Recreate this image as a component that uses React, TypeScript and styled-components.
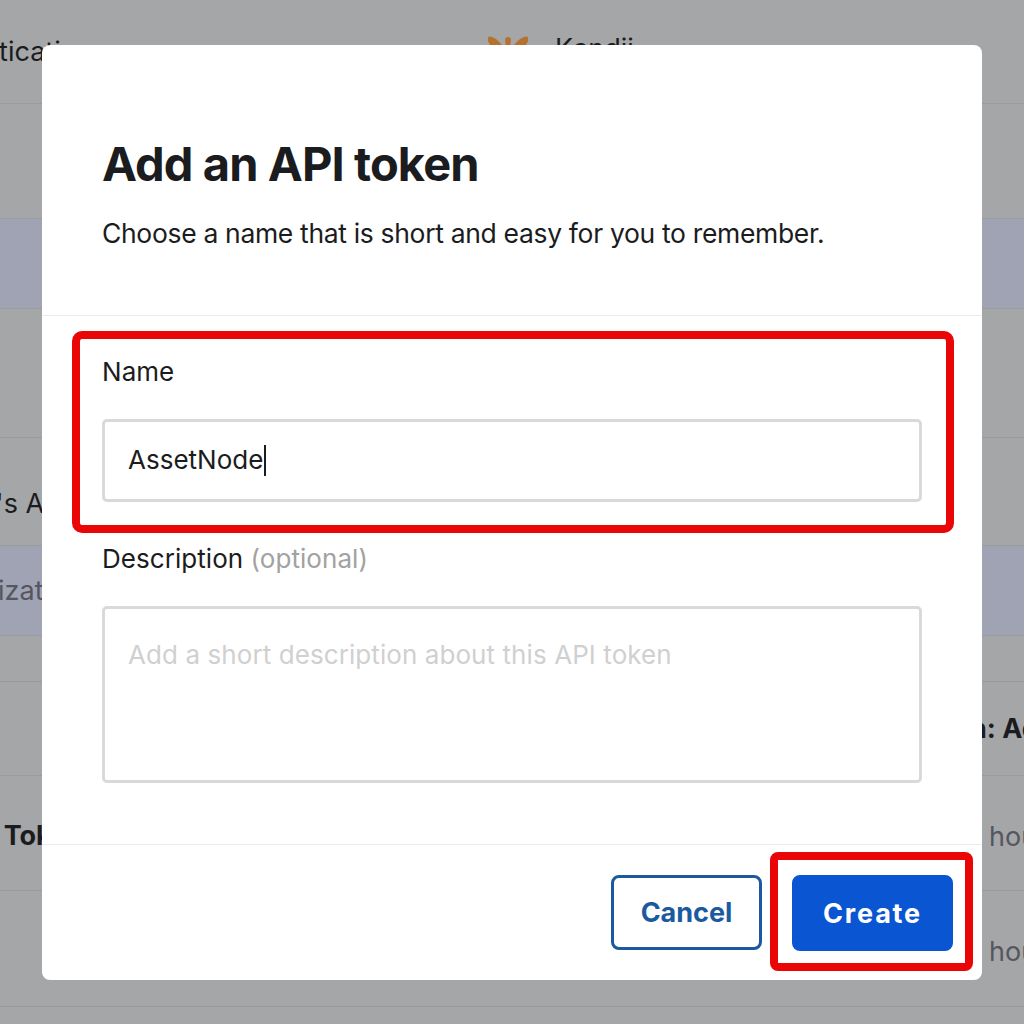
import React from "react";
import styled, { createGlobalStyle } from "styled-components";

const Global = createGlobalStyle`
  html, body { margin: 0; height: 100%; overflow: hidden; background: #a5a6a8; }
  body { font-family: "Inter", "Liberation Sans", sans-serif; }
  * { box-sizing: border-box; }
`;

const Page = styled.div`
  width: 1024px;
  height: 1024px;
  overflow: hidden;
  display: flex;
  flex-direction: column;
`;

const Row = styled.div<{ $h: number; $active?: boolean }>`
  flex: 0 0 ${(p) => p.$h}px;
  display: grid;
  grid-template-columns: 488px 501px 1fr;
  align-items: center;
  border-bottom: 1px solid #9a9b9d;
  background: ${(p) => (p.$active ? "#a0a3b4" : "transparent")};
  font-size: 27px;
  white-space: nowrap;
  color: #1b1c20;
`;

const LeftCell = styled.div<{ $shift: number; $muted?: boolean; $bold?: boolean; $y?: number }>`
  margin-left: ${(p) => p.$shift}px;
  margin-top: ${(p) => p.$y ?? 0}px;
  color: ${(p) => (p.$muted ? "#55565f" : "#1b1c20")};
  font-weight: ${(p) => (p.$bold ? 700 : 400)};
`;

const VendorCell = styled.div`
  display: flex;
  align-items: center;
  gap: 27px;
  margin-top: -6px;
`;

const RightCell = styled.div<{ $bold?: boolean; $shift?: number; $y?: number }>`
  color: ${(p) => (p.$bold ? "#1b1c20" : "#55565f")};
  font-weight: ${(p) => (p.$bold ? 700 : 400)};
  margin-left: ${(p) => p.$shift ?? 0}px;
  margin-top: ${(p) => p.$y ?? 0}px;
`;

const Overlay = styled.div`
  position: fixed;
  inset: 0;
  padding: 45px 42px 44px;
`;

const Modal = styled.div`
  width: 940px;
  height: 935px;
  background: #fff;
  border-radius: 8px;
  display: flex;
  flex-direction: column;
  color: #1b1c20;
`;

const Header = styled.header`
  flex: 0 0 271px;
  padding: 93px 60px 0;
  border-bottom: 1px solid #ececec;
`;

const Title = styled.h1`
  margin: 0;
  font-size: 47px;
  line-height: 52px;
  font-weight: 700;
  letter-spacing: -0.9px;
`;

const Subtitle = styled.p`
  margin: 26px 0 0;
  font-size: 26.5px;
  line-height: 34px;
  font-weight: 400;
  letter-spacing: -0.33px;
`;

const Highlighted = styled.section`
  margin: 15px 28px 0 30px;
  height: 202px;
  border: 8px solid #ea0606;
  border-radius: 10px;
  padding: 16px 22px 0;
`;

const Label = styled.label`
  display: block;
  font-size: 26px;
  line-height: 34px;
  letter-spacing: 0.05px;
`;

const Muted = styled.span`
  color: #a2a2a2;
`;

const Field = styled.div`
  margin-top: 30px;
  height: 83px;
  width: 820px;
  border: 3px solid #d9d9d9;
  border-radius: 5px;
  padding: 0 23px 2px;
  display: flex;
  align-items: center;
  font-size: 26px;
`;

const Caret = styled.span`
  display: inline-block;
  width: 2px;
  height: 31px;
  margin: 2px 0 0 1px;
  background: #1b1c20;
`;

const Lower = styled.section`
  flex: 1;
  padding: 9px 60px 0;
`;

const TextArea = styled.div`
  margin-top: 30px;
  height: 177px;
  border: 3px solid #d9d9d9;
  border-radius: 5px;
  padding: 29px 23px;
  font-size: 26px;
  line-height: 34px;
  letter-spacing: 0.08px;
  color: #d0d0d0;
`;

const Footer = styled.footer`
  flex: 0 0 136px;
  border-top: 1px solid #ececec;
  display: flex;
  justify-content: flex-end;
  align-items: flex-start;
  padding: 7px 9px 0 0;
  gap: 8px;
`;

const Button = styled.button<{ $primary?: boolean }>`
  font-family: inherit;
  font-size: 27px;
  font-weight: 700;
  width: ${(p) => (p.$primary ? 161 : 151)}px;
  height: ${(p) => (p.$primary ? 76 : 75)}px;
  border-radius: 8px;
  border: 3px solid ${(p) => (p.$primary ? "#0a55d2" : "#1c5aa0")};
  background: ${(p) => (p.$primary ? "#0a55d2" : "#fff")};
  color: ${(p) => (p.$primary ? "#fff" : "#1c5aa0")};
  letter-spacing: ${(p) => (p.$primary ? "1.8px" : "0")};
  padding: 0;
`;

const CancelWrap = styled.div`
  margin-top: 23px;
`;

const CreateMark = styled.div`
  width: 203px;
  height: 119px;
  border: 8px solid #ea0606;
  border-radius: 8px;
  padding: 15px 12px 0 14px;
`;

const Logo = () => (
  <svg width="40" height="40" viewBox="0 0 40 40" aria-hidden="true">
    <g fill="#b5712f">
      <ellipse cx="8" cy="16" rx="4.5" ry="11" transform="rotate(-45 8 16)" />
      <ellipse cx="32" cy="16" rx="4.5" ry="11" transform="rotate(45 32 16)" />
      <circle cx="20" cy="11" r="3" />
      <rect x="17.5" y="11" width="5" height="20" rx="2.5" />
    </g>
  </svg>
);

export default function App() {
  return (
    <>
      <Global />
      <Page>
        <Row $h={104}>
          <LeftCell $shift={-92}>Authentication</LeftCell>
          <VendorCell>
            <Logo />
            <span>Kandji</span>
          </VendorCell>
        </Row>
        <Row $h={115} />
        <Row $h={90} $active />
        <Row $h={129} />
        <Row $h={108}>
          <LeftCell $shift={-50} $y={24}>Jim's API</LeftCell>
        </Row>
        <Row $h={90} $active>
          <LeftCell $shift={-80} $muted>Organization</LeftCell>
        </Row>
        <Row $h={46} />
        <Row $h={94}>
          <span />
          <span />
          <RightCell $bold $shift={-19}>n: Admin</RightCell>
        </Row>
        <Row $h={115}>
          <LeftCell $shift={-48} $bold $y={4}>API Token</LeftCell>
          <span />
          <RightCell $y={6}>hours ago</RightCell>
        </Row>
        <Row $h={116}>
          <span />
          <span />
          <RightCell $y={6}>hours ago</RightCell>
        </Row>
        <Row $h={18} />
      </Page>
      <Overlay>
        <Modal>
          <Header>
            <Title>Add an API token</Title>
            <Subtitle>Choose a name that is short and easy for you to remember.</Subtitle>
          </Header>
          <Highlighted>
            <Label>Name</Label>
            <Field>
              AssetNode
              <Caret />
            </Field>
          </Highlighted>
          <Lower>
            <Label>
              Description <Muted>(optional)</Muted>
            </Label>
            <TextArea>Add a short description about this API token</TextArea>
          </Lower>
          <Footer>
            <CancelWrap>
              <Button>Cancel</Button>
            </CancelWrap>
            <CreateMark>
              <Button $primary>Create</Button>
            </CreateMark>
          </Footer>
        </Modal>
      </Overlay>
    </>
  );
}
